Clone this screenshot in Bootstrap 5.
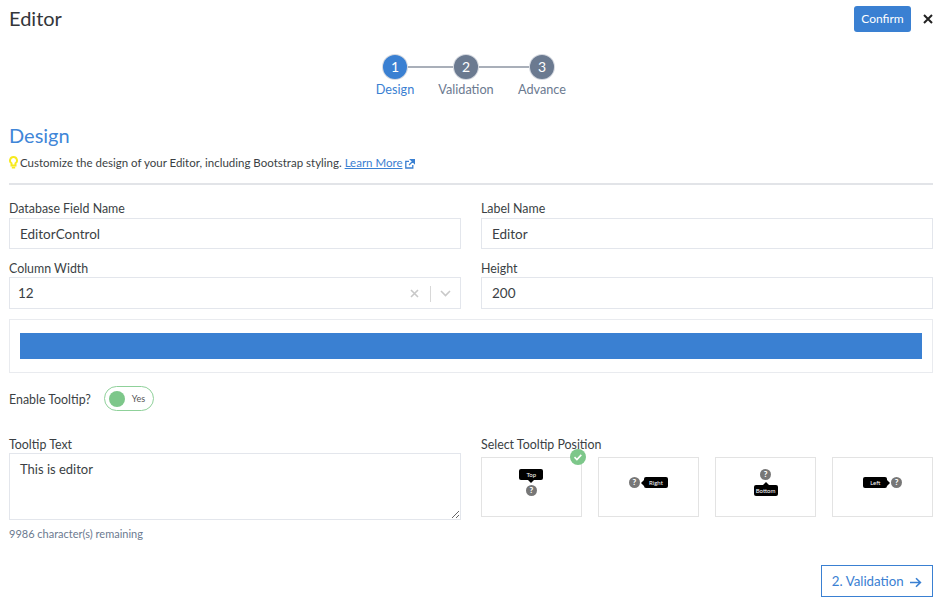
<!DOCTYPE html>
<html lang="en">
<head>
  <meta charset="UTF-8">
  <meta name="viewport" content="width=device-width, initial-scale=1.0">
  <title>Editor</title>
  <link href="https://cdn.jsdelivr.net/npm/bootstrap@5.3.0/dist/css/bootstrap.min.css" rel="stylesheet">
  <style>
    html, body { height: 100%; }
    body { font-family: Lato, sans-serif; color: #3b3f44; background: #fff; overflow: hidden; }
    .page-wrap { padding: 6px 9px 0; }
    .top-bar { height: 26px; }
    .page-title { font-size: 20px; line-height: 24px; font-weight: 400; color: #33363a; margin: 0 0 2px; }
    .btn-confirm { background: #3a80d2; color: #fff; font-size: 12px; line-height: 26px; height: 26px; width: 57px; padding: 0; border: 0; border-radius: 3px; }
    .btn-shut { background: none; border: 0; padding: 0; margin-left: 11px; margin-right: -1px; width: 12px; height: 12px; line-height: 0; }

    .stepper { margin-top: 23px; height: 48px; width: 220px; margin-left: 346px; }
    .step-line { height: 2px; background: #a9afb9; top: 11px; left: 40px; width: 147px; }
    .step-item { width: 80px; flex: none; color: #6b7a90; font-size: 12.7px; line-height: 16px; text-align: center; }
    .step-dot { width: 24px; height: 24px; border-radius: 50%; background: #6b7a90; color: #fff; font-size: 14px; line-height: 24px; margin: 0 auto 2px; box-shadow: 0 0 0 1px #d5d9e0; position: relative; }
    .step-on { color: #3a80d2; }
    .step-on .step-dot { background: #3a80d2; }

    .section-title { font-size: 20px; line-height: 26px; color: #3f86d8; margin: 19px 0 0; font-weight: 400; }
    .section-hint { font-size: 11.5px; line-height: 16px; margin: 7px 0 0; color: #3b3f44; }
    .section-hint a { color: #3a80d2; }
    .rule-line { height: 2px; background: #e2e4e8; margin: 12px 0 16px; }

    .form-grid { display: grid; grid-template-columns: 452px 452px; column-gap: 20px; }
    .field-label { display: block; font-size: 12.4px; line-height: 16px; margin-bottom: 1px; color: #3b3f44; }
    .field-input { display: block; width: 100%; height: 31px; border: 1px solid #e3e6ec; border-radius: 0; padding: 0 10px; font-size: 13.5px; color: #3b3f44; font-family: inherit; background: #fff; }
    .field-gap { margin-bottom: 12px; }
    .row-tall .field-label { margin-bottom: 0; }
    .row-tall .field-input { height: 32px; }
    .select-box { padding: 1px 9px 0 8px; }
    .select-sep { width: 1px; height: 16px; background: #d8d8d8; margin: 0 9px 0 11px; }

    .color-box { border: 1px solid #e9ebef; padding: 13px 10px; margin-top: 10px; }
    .color-bar { height: 26px; background: #3a80d2; }

    .tooltip-row { margin-top: 13px; height: 25px; }
    .tooltip-row label { font-size: 12.4px; margin-right: 13px; padding-top: 4px; }
    .yes-toggle { width: 50px; height: 25px; border: 1px solid #8fd19a; border-radius: 13px; padding: 0 4px; font-size: 9px; color: #555; }
    .yes-knob { width: 16px; height: 16px; border-radius: 50%; background: #7dc78a; margin-right: 7px; }

    .lower-grid { margin-top: 26px; }
    .tip-area { height: 67px; padding: 7px 10px; margin-top: -1px; resize: vertical; line-height: 16px; font-size: 13px; }
    .char-note { font-size: 11px; line-height: 14px; color: #6b7a90; margin-top: 7px; }
    .tile-grid { display: grid; grid-template-columns: repeat(4, 1fr); column-gap: 16.5px; margin-top: 4px; }
    .pos-tile { height: 60px; border: 1px solid #e3e3e3; position: relative; padding-bottom: 9px; }
    .tile-check { position: absolute; top: -9px; right: -5px; width: 16px; height: 16px; border-radius: 50%; background: #7dc78a; line-height: 0; }
    .tip-chip { background: #000; color: #fff; font-size: 6px; line-height: 11px; width: 24px; border-radius: 2px; position: relative; text-align: center; }
    .chip-top::after, .chip-bottom::after, .chip-left::after, .chip-right::after { content: ""; position: absolute; border: 3px solid transparent; }
    .chip-top::after { border-top-color: #000; top: 100%; left: 50%; margin-left: -3px; }
    .chip-bottom::after { border-bottom-color: #000; bottom: 100%; left: 50%; margin-left: -3px; }
    .chip-right::after { border-right-color: #000; right: 100%; top: 50%; margin-top: -3px; }
    .chip-left::after { border-left-color: #000; left: 100%; top: 50%; margin-top: -3px; }
    .help-dot { width: 11px; height: 11px; border-radius: 50%; background: #777; color: #fff; font-size: 8px; font-weight: 900; line-height: 11px; text-align: center; flex: none; }
    .gap-col { gap: 5px; }
    .gap-side { gap: 4px; }

    .next-row { margin-top: 24px; }
    .btn-next { width: 112px; height: 32px; padding: 0; border: 1px solid #3a80d2; border-radius: 0; color: #3a80d2; background: #fff; font-size: 13.3px; line-height: 28px; }
  </style>
</head>
<body>
  <div class="page-wrap">
    <!-- title bar -->
    <div class="top-bar d-flex align-items-center justify-content-between">
      <h1 class="page-title">Editor</h1>
      <div class="d-flex align-items-center">
        <button type="button" class="btn btn-confirm">Confirm</button>
        <button type="button" class="btn-shut" aria-label="Close">
          <svg width="12" height="12" viewBox="0 0 12 12"><path d="M2 2l8 8M10 2l-8 8" stroke="#222" stroke-width="2" fill="none"/></svg>
        </button>
      </div>
    </div>

    <!-- steps -->
    <div class="stepper d-flex position-relative">
      <div class="step-line position-absolute"></div>
      <div class="step-item step-on" style="margin-right:-9px"><div class="step-dot">1</div>Design</div>
      <div class="step-item" style="margin-right:-4px"><div class="step-dot">2</div>Validation</div>
      <div class="step-item"><div class="step-dot">3</div>Advance</div>
    </div>

    <h2 class="section-title">Design</h2>
    <p class="section-hint">
      <svg width="9" height="13" viewBox="0 0 9 13" style="vertical-align:-2px;margin-right:2px"><path d="M4.5 1.1a3.4 3.4 0 0 0-2 6.2V9.6h4V7.3a3.4 3.4 0 0 0-2-6.2z" fill="none" stroke="#f7ea1f" stroke-width="2"/><path d="M2.8 11.6h3.4" stroke="#f7ea1f" stroke-width="1.8"/></svg>Customize the design of your Editor, including Bootstrap styling. <a href="#">Learn More</a><svg width="10" height="10" viewBox="0 0 10 10" style="margin-left:2px"><path d="M7.8 6v3H.8V2.4H4" fill="none" stroke="#3a80d2" stroke-width="1.3"/><path d="M5.5.5h4v4zM7.8 2.3L4 6" fill="#3a80d2" stroke="#3a80d2" stroke-width="1.2"/></svg>
    </p>
    <div class="rule-line"></div>

    <div class="form-grid">
      <div class="field-gap">
        <label class="field-label">Database Field Name</label>
        <input class="field-input" value="EditorControl">
      </div>
      <div class="field-gap">
        <label class="field-label">Label Name</label>
        <input class="field-input" value="Editor">
      </div>
      <div class="row-tall">
        <label class="field-label">Column Width</label>
        <div class="field-input select-box d-flex align-items-center justify-content-between">
          <span>12</span>
          <span class="d-flex align-items-center">
            <svg width="9" height="9" viewBox="0 0 9 9"><path d="M1 1l7 7M8 1l-7 7" stroke="#c8c8c8" stroke-width="1.6" fill="none"/></svg>
            <span class="select-sep"></span>
            <svg width="11" height="7" viewBox="0 0 11 7"><path d="M1 1l4.5 4.5L10 1" stroke="#c8c8c8" stroke-width="1.6" fill="none"/></svg>
          </span>
        </div>
      </div>
      <div class="row-tall">
        <label class="field-label">Height</label>
        <input class="field-input" value="200">
      </div>
    </div>

    <div class="color-box"><div class="color-bar"></div></div>

    <div class="tooltip-row d-flex align-items-center">
      <label>Enable Tooltip?</label>
      <div class="yes-toggle d-flex align-items-center"><span class="yes-knob"></span>Yes</div>
    </div>

    <div class="form-grid lower-grid">
      <div>
        <label class="field-label">Tooltip Text</label>
        <textarea class="field-input tip-area">This is editor</textarea>
        <div class="char-note">9986 character(s) remaining</div>
      </div>
      <div>
        <label class="field-label">Select Tooltip Position</label>
        <div class="tile-grid">
          <div class="pos-tile d-flex flex-column align-items-center justify-content-center gap-col">
            <span class="tile-check"><svg width="16" height="16" viewBox="0 0 16 16"><path d="M4.5 8.2l2.4 2.3 4.4-4.6" stroke="#fff" stroke-width="1.6" fill="none"/></svg></span>
            <div class="tip-chip chip-top">Top</div>
            <div class="help-dot">?</div>
          </div>
          <div class="pos-tile d-flex align-items-center justify-content-center gap-side">
            <div class="help-dot">?</div>
            <div class="tip-chip chip-right">Right</div>
          </div>
          <div class="pos-tile d-flex flex-column align-items-center justify-content-center gap-col">
            <div class="help-dot">?</div>
            <div class="tip-chip chip-bottom">Bottom</div>
          </div>
          <div class="pos-tile d-flex align-items-center justify-content-center gap-side">
            <div class="tip-chip chip-left">Left</div>
            <div class="help-dot">?</div>
          </div>
        </div>
      </div>
    </div>

    <div class="next-row d-flex justify-content-end">
      <button type="button" class="btn btn-next">2. Validation <svg width="13" height="11" viewBox="0 0 13 11" style="margin-left:2px"><path d="M1 5.5h10M7 1.2l4.4 4.3L7 9.8" stroke="#3a80d2" stroke-width="1.6" fill="none"/></svg></button>
    </div>
  </div>
  <script src="https://cdn.jsdelivr.net/npm/bootstrap@5.3.0/dist/js/bootstrap.bundle.min.js"></script>
</body>
</html>
